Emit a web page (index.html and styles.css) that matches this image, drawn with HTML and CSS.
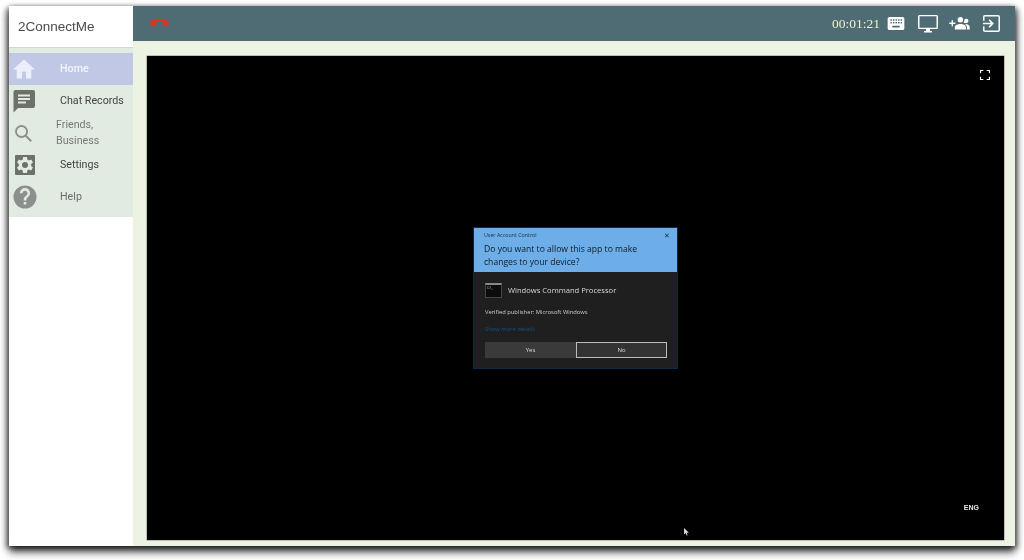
FILE: index.html
```html
<!DOCTYPE html>
<html lang="en">
<head>
<meta charset="utf-8">
<title>2ConnectMe</title>
<link rel="stylesheet" href="styles.css">
</head>
<body>
<div class="window">
  <aside class="sidebar">
    <div class="brand">2ConnectMe</div>
    <nav class="nav">
      <div class="item active">
        <svg class="icon wide" viewBox="0 0 24 24"><path d="M10 21.500v-7h4v7h5.300v-9H23L12 2.500 1 12.500h3.700v9z"/></svg>
        <span class="label">Home</span>
      </div>
      <div class="item dark">
        <svg class="icon wide" viewBox="0 0 24 24"><path d="M3 1h18a2 2 0 0 1 2 2v14a2 2 0 0 1-2 2H6l-4.500 4.500V3a2 2 0 0 1 1.500-2zM6 5.500v2h12v-2zM6 9v2h12V9zM6 12.500v2h8v-2z" fill-rule="evenodd"/></svg>
        <span class="label">Chat Records</span>
      </div>
      <div class="item">
        <svg class="icon search" viewBox="0 0 24 24"><circle cx="9.500" cy="9.500" r="7"/><path d="M14.800 14.800l7 7"/></svg>
        <span class="label narrow">Friends, Business</span>
      </div>
      <div class="item dark">
        <svg class="icon" viewBox="0 0 24 24"><path fill-rule="evenodd" d="M3 2h18a1 1 0 0 1 1 1v18a1 1 0 0 1-1 1H3a1 1 0 0 1-1-1V3a1 1 0 0 1 1-1zm15.100 10.900a6 6 0 0 0 0-1.800l1.900-1.500-1.800-3.100-2.300.9a7 7 0 0 0-1.500-.9L14 4h-3.900l-.4 2.500a7 7 0 0 0-1.500.9l-2.300-.9L4 9.600l1.900 1.500a6 6 0 0 0 0 1.800L4 14.400l1.800 3.100 2.300-.9a7 7 0 0 0 1.500.9L10 20h3.900l.4-2.500a7 7 0 0 0 1.500-.9l2.300.9 1.800-3.100zM12 15a3 3 0 1 1 0-6 3 3 0 0 1 0 6z"/></svg>
        <span class="label">Settings</span>
      </div>
      <div class="item">
        <svg class="icon" viewBox="0 0 24 24"><path d="M12 .5a11.500 11.500 0 1 0 0 23 11.500 11.500 0 0 0 0-23zm1.300 19h-2.600v-2.600h2.600zm2.700-8.500-1.200 1.200c-1 1-1.500 1.800-1.500 3.300h-2.600V15c0-1.400.5-2.500 1.500-3.500l1.600-1.600c.5-.5.7-1.100.7-1.700a2.500 2.500 0 0 0-5 0H6.900a5.100 5.100 0 0 1 10.200 0c0 1.100-.4 2-1.100 2.800z"/></svg>
        <span class="label">Help</span>
      </div>
    </nav>
  </aside>
  <main class="main">
    <header class="topbar">
      <svg class="hangup" viewBox="0 0 24 12"><path d="M12 1C7.500 1 3.500 2.500 1 5c-.5.500-.5 1.200 0 1.700l2.500 2.500c.5.500 1.200.5 1.700.1l2.500-1.800c.4-.3.6-.7.6-1.100V4.200C9.100 3.800 10.500 3.600 12 3.600s2.900.2 3.700.6v2.200c0 .4.200.8.600 1.100l2.500 1.800c.5.400 1.200.4 1.700-.1L23 6.700c.5-.5.5-1.200 0-1.700C20.500 2.500 16.500 1 12 1z"/></svg>
      <div class="tools">
        <span class="timer">00:01:21</span>
        <svg class="keyboard" viewBox="0 0 18 14"><path fill-rule="evenodd" d="M2 0h14a2 2 0 0 1 2 2v10a2 2 0 0 1-2 2H2a2 2 0 0 1-2-2V2a2 2 0 0 1 2-2zm1 2.500v1.500h1.500V2.500zm2.800 0v1.500h1.500V2.500zm2.700 0v1.500H10V2.500zm2.800 0v1.500h1.500V2.500zm2.700 0v1.500h1.500V2.500zM3 5.500V7h1.500V5.500zm2.800 0V7h1.500V5.500zm2.700 0V7H10V5.500zm2.800 0V7h1.500V5.500zm2.700 0V7h1.500V5.500zM5 9.500v1.800h8V9.500z"/></svg>
        <svg class="monitor" viewBox="0 0 20 18"><path fill-rule="evenodd" d="M1.500 0h17A1.500 1.500 0 0 1 20 1.500v11a1.500 1.500 0 0 1-1.500 1.500H12v2h2v1.500H6V16h2v-2H1.500A1.500 1.500 0 0 1 0 12.500v-11A1.500 1.500 0 0 1 1.500 0zm0 1.200v11.600h17V1.200z"/></svg>
        <svg class="people" viewBox="0 0 22 14"><path d="M0 6h2.500V3.500h1.500V6h2.500v1.500H4V10H2.500V7.500H0zM12 6a3 3 0 1 0 0-6 3 3 0 0 0 0 6zm6.500.5a2.300 2.300 0 1 0-2.300-3.200 4 4 0 0 1-.8 2.900c.7.400 2 .3 3.100.3zM12 7.500c-2.500 0-6 1.200-6 3.500v2.500h12V11c0-2.300-3.500-3.500-6-3.500zm7 .3c-.8 0-1.500 0-2.200.2 1.300.8 2.200 1.800 2.200 3v2.500h3v-2.500c0-1.800-1.800-3-3-3.200z"/></svg>
        <svg class="exit" viewBox="0 0 18 18"><path fill-rule="evenodd" d="M2 0h14a2 2 0 0 1 2 2v14a2 2 0 0 1-2 2H2a2 2 0 0 1-2-2v-4h1.600v4.400h14.800V1.600H1.600V6H0V2a2 2 0 0 1 2-2zm5 4.500L11.500 9 7 13.500l-1.100-1.100L8.300 9.800H0V8.200h8.300L5.900 5.600z"/></svg>
      </div>
    </header>
    <section class="stage">
      <svg class="fullscreen" viewBox="0 0 10 10"><path d="M0 0h3.300v1.100H1.100v2.200H0zM6.700 0H10v3.300H8.900V1.100H6.700zM0 6.700h1.100v2.200h2.200V10H0zM8.900 6.700H10V10H6.700V8.900h2.200z"/></svg>
      <div class="dialog">
        <div class="dialog-head">
          <div class="dialog-title"><span>User Account Control</span><span class="close">✕</span></div>
          <div class="question">Do you want to allow this app to make changes to your device?</div>
        </div>
        <div class="dialog-body">
          <div class="app">
            <div class="cmd"><span class="prompt">C:\_</span></div>
            <span>Windows Command Processor</span>
          </div>
          <div class="publisher">Verified publisher: Microsoft Windows</div>
          <div class="details">Show more details</div>
          <div class="buttons">
            <div class="btn">Yes</div>
            <div class="btn focused">No</div>
          </div>
        </div>
      </div>
      <span class="lang">ENG</span>
      <svg class="cursor" viewBox="0 0 8 11"><path d="M0 0v9l2.200-2 1.400 3.400 1.300-.6L3.500 6.500h3z"/></svg>
    </section>
  </main>
</div>
</body>
</html>
```

FILE: styles.css
```css
* { box-sizing: border-box; }
html, body { margin: 0; height: 100%; background: #fff; overflow: hidden; }
body { padding: 6px 9px 14px 9px; font-family: Roboto, "Liberation Sans", sans-serif; }

.window {
  display: flex;
  height: 540px;
  background: #ecf3e3;
  box-shadow: 0 6px 8px rgba(0, 0, 0, 0.7), -3px 2px 5px rgba(0, 0, 0, 0.4), 3px 2px 5px rgba(0, 0, 0, 0.4), 0 -1px 4px rgba(0, 0, 0, 0.15);
}

.sidebar { width: 124px; flex: none; background: #fff; display: flex; flex-direction: column; }
.brand {
  height: 42px;
  padding: 0 0 1px 9px;
  display: flex;
  align-items: center;
  font-family: "Liberation Sans", sans-serif;
  font-size: 13.500px;
  color: #4a4a4a;
  border-bottom: 1px solid #d5d9d3;
  filter: blur(0.3px);
}
.nav { background: #e1ebe2; padding: 5px 0 4px; }
.item { height: 32px; display: flex; align-items: center; color: #8c8f8b; filter: blur(0.3px); }
.item.dark { color: #6d716c; }
.item.active { background: #c0c8e6; color: #eceffa; }
.icon { width: 24px; height: 24px; margin-left: 4px; fill: currentColor; flex: none; }
.icon.wide { margin-left: 3px; margin-right: 1px; }
.icon.search { width: 19px; height: 19px; margin-left: 5px; margin-right: 3px; fill: none; stroke: currentColor; stroke-width: 2.400; }
.label { margin-left: 23px; font-size: 10.700px; line-height: 16px; color: #6b6b6b; }
.item.dark .label { color: #444; }
.item.active .label { color: #f4f5fb; font-weight: 500; }
.label.narrow { margin-left: 20px; width: 60px; color: #777; }

.main { flex: 1; display: flex; flex-direction: column; min-width: 0; }
.topbar {
  height: 35px;
  background: #4f6c75;
  display: flex;
  align-items: center;
  justify-content: space-between;
  padding: 0 15px 0 16px;
  filter: blur(0.3px);
}
.hangup { width: 21px; height: 10.500px; fill: #e8311a; }
.tools { display: flex; align-items: center; }
.timer { font-family: "Liberation Serif", serif; font-size: 13.500px; color: #eef0c8; margin-right: 7px; }
.tools svg { fill: #fff; flex: none; }
.keyboard { width: 18px; height: 13px; margin-right: 13px; }
.monitor { width: 20px; height: 18px; margin-right: 11px; }
.people { width: 21px; height: 13px; margin-right: 13px; }
.exit { width: 17px; height: 17px; }

.stage {
  position: relative;
  flex: 1;
  margin: 15px 11px 6px 14px;
  background: #000;
  display: flex;
  align-items: center;
  justify-content: center;
  box-shadow: 0 0 0 0.5px #8a8f86;
}
.fullscreen { position: absolute; top: 14px; right: 14px; width: 10px; height: 10px; fill: #fff; filter: blur(0.2px); }
.lang { position: absolute; right: 25px; bottom: 29px; font-family: "Liberation Sans", sans-serif; font-size: 7px; font-weight: 700; color: #e8e8e8; filter: blur(0.3px); }
.cursor { position: absolute; left: 537px; bottom: 4px; width: 6px; height: 8px; fill: #ddd; }

.dialog {
  width: 203px;
  height: 140px;
  background: #1f1f1f;
  box-shadow: 0 0 0 1px #0e2a45;
  font-family: "Open Sans", "Liberation Sans", sans-serif;
  display: flex;
  flex-direction: column;
  filter: blur(0.4px);
}
.dialog-head { height: 44px; background: #6eaee8; padding: 3px 7px 0 10px; color: #10202e; }
.dialog-title { display: flex; justify-content: space-between; align-items: center; font-size: 5.300px; line-height: 9px; color: #1c2c3a; }
.close { font-size: 7px; }
.question { font-size: 8.600px; line-height: 12.500px; margin-top: 3px; width: 170px; color: #0d1b28; }
.dialog-body { flex: 1; padding: 9px 10px 10px 11px; display: flex; flex-direction: column; color: #d8d8d8; }
.app { display: flex; align-items: center; gap: 6px; font-size: 7.600px; height: 18px; }
.cmd { width: 17px; height: 15px; background: #0c0c0c; border: 1px solid #444; border-top-width: 2px; border-top-color: #888; display: flex; }
.prompt { font-size: 3.500px; line-height: 5px; color: #ccc; margin-left: 1px; }
.publisher { font-size: 5.800px; line-height: 9px; margin-top: 9px; color: #cfcfcf; }
.details { font-size: 5.800px; line-height: 9px; margin-top: 8px; color: #12518f; }
.buttons { display: flex; margin-top: auto; height: 16px; }
.btn { flex: 1; background: #3a3a3a; display: flex; align-items: center; justify-content: center; font-size: 6px; color: #dcdcdc; }
.btn.focused { background: #333; box-shadow: inset 0 0 0 1px #bdbdbd; }
```
